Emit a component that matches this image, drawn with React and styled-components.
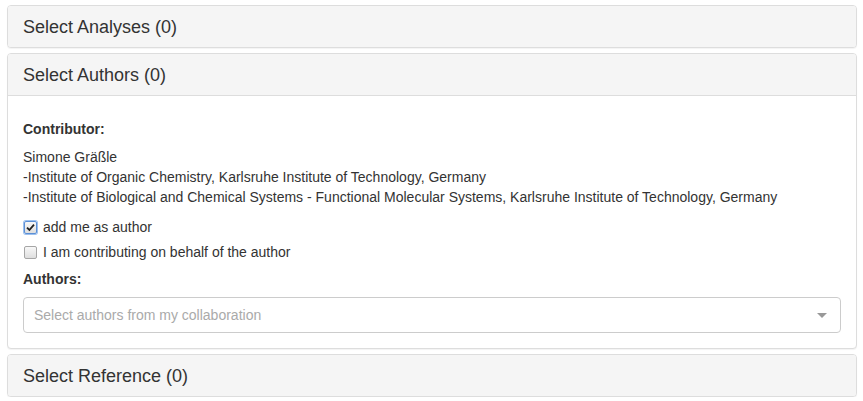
import React from 'react';
import styled, { createGlobalStyle } from 'styled-components';

const GlobalStyle = createGlobalStyle`
  html, body {
    margin: 0;
    padding: 0;
    background: #fff;
  }
  body {
    font-family: "Liberation Sans", Arial, sans-serif;
    font-size: 14px;
    line-height: 20px;
    color: #333;
  }
`;

const Page = styled.div`
  padding: 5px 6px 0 7px;
  display: flex;
  flex-direction: column;
  gap: 5px;
`;

const Panel = styled.div`
  width: 848px;
  border: 1px solid #ddd;
  border-radius: 4px;
  background: #fff;
  box-shadow: 0 1px 1px rgba(0, 0, 0, 0.05);
  overflow: hidden;
`;

const PanelHeading = styled.div`
  background: #f5f5f5;
  padding: 11px 15px 9px;
  font-size: 18px;
  line-height: 21px;
  color: #333;
  border-bottom: ${p => (p.$open ? '1px solid #ddd' : 'none')};
`;

const PanelBody = styled.div`
  padding: 23px 15px 15px;
  display: flex;
  flex-direction: column;
`;

const Label = styled.div`
  font-weight: bold;
  margin-bottom: ${p => p.$mb || 8}px;
`;

const Affiliations = styled.div`
  margin-bottom: 10px;
`;

const CheckRow = styled.label`
  display: flex;
  align-items: center;
  gap: 6px;
  margin-bottom: ${p => p.$mb || 5}px;
`;

const Box = styled.span`
  width: 11px;
  height: 11px;
  border: 1px solid ${p => (p.$focus ? '#5b8fd6' : '#a6a6a6')};
  box-shadow: ${p => (p.$focus ? '0 0 0 1px #9cc0ee' : 'none')};
  border-radius: 2px;
  background: linear-gradient(#f8f8f8, #dedede);
  display: flex;
  align-items: center;
  justify-content: center;
  margin-left: 1px;
`;

const SelectBox = styled.div`
  height: 34px;
  border: 1px solid #ccc;
  border-radius: 4px;
  display: flex;
  align-items: center;
  padding: 0 13px 0 10px;
  color: #aaa;
`;

const Placeholder = styled.span`
  flex: 1;
`;

const Caret = styled.span`
  width: 0;
  height: 0;
  border-left: 5px solid transparent;
  border-right: 5px solid transparent;
  border-top: 5px solid #999;
`;

function Checkbox({ checked, focus, children, mb }) {
  return (
    <CheckRow $mb={mb}>
      <Box $focus={focus}>
        {checked && (
          <svg width="9" height="9" viewBox="0 0 9 9">
            <path d="M1 4.6 L3.4 7 L8 1.6" fill="none" stroke="#222" strokeWidth="1.8" />
          </svg>
        )}
      </Box>
      {children}
    </CheckRow>
  );
}

export default function App() {
  return (
    <Page>
      <GlobalStyle />
      <Panel>
        <PanelHeading>Select Analyses (0)</PanelHeading>
      </Panel>
      <Panel>
        <PanelHeading $open>Select Authors (0)</PanelHeading>
        <PanelBody>
          <Label>Contributor:</Label>
          <Affiliations>
            <div>Simone Gräßle</div>
            <div>-Institute of Organic Chemistry, Karlsruhe Institute of Technology, Germany</div>
            <div>-Institute of Biological and Chemical Systems - Functional Molecular Systems, Karlsruhe Institute of Technology, Germany</div>
          </Affiliations>
          <Checkbox checked focus>add me as author</Checkbox>
          <Checkbox mb={7}>I am contributing on behalf of the author</Checkbox>
          <Label>Authors:</Label>
          <SelectBox>
            <Placeholder>Select authors from my collaboration</Placeholder>
            <Caret />
          </SelectBox>
        </PanelBody>
      </Panel>
      <Panel>
        <PanelHeading>Select Reference (0)</PanelHeading>
      </Panel>
    </Page>
  );
}
